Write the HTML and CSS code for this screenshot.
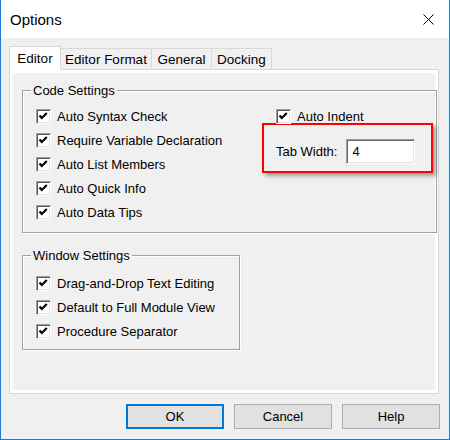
FILE: index.html
```html
<!DOCTYPE html>
<html lang="en">
<head>
    <meta charset="UTF-8">
    <title>Options</title>
    <link rel="stylesheet" href="styles.css">
</head>
<body>
    <div class="window">
        <div class="titlebar">
            <span class="title">Options</span>
            <svg class="close" width="11" height="11" viewBox="0 0 11 11">
                <path d="M0.5 0.5 L10.5 10.5 M10.5 0.5 L0.5 10.5" stroke="#000" stroke-width="1" fill="none"/>
            </svg>
        </div>

        <div class="dialog">
            <div class="tabs">
                <div class="tab active tab-editor">Editor</div>
                <div class="tab tab-format">Editor Format</div>
                <div class="tab tab-general">General</div>
                <div class="tab tab-docking">Docking</div>
            </div>

            <div class="panel">
                <fieldset class="group code-group">
                    <legend>Code Settings</legend>
                    <div class="cols">
                        <div class="col">
                            <div class="check"><span class="box"><svg viewBox="0 0 13 13"><path d="M2.5 5.5 L4.8 8 L9.8 3"/></svg></span>Auto Syntax Check</div>
                            <div class="check"><span class="box"><svg viewBox="0 0 13 13"><path d="M2.5 5.5 L4.8 8 L9.8 3"/></svg></span>Require Variable Declaration</div>
                            <div class="check"><span class="box"><svg viewBox="0 0 13 13"><path d="M2.5 5.5 L4.8 8 L9.8 3"/></svg></span>Auto List Members</div>
                            <div class="check"><span class="box"><svg viewBox="0 0 13 13"><path d="M2.5 5.5 L4.8 8 L9.8 3"/></svg></span>Auto Quick Info</div>
                            <div class="check"><span class="box"><svg viewBox="0 0 13 13"><path d="M2.5 5.5 L4.8 8 L9.8 3"/></svg></span>Auto Data Tips</div>
                        </div>
                        <div class="col">
                            <div class="check indent"><span class="box"><svg viewBox="0 0 13 13"><path d="M2.5 5.5 L4.8 8 L9.8 3"/></svg></span>Auto Indent</div>
                            <!-- red marker around the tab width field -->
                            <div class="highlight">
                                <span class="label">Tab Width:</span>
                                <input class="field" type="text" value="4">
                            </div>
                        </div>
                    </div>
                </fieldset>

                <fieldset class="group window-group">
                    <legend>Window Settings</legend>
                    <div class="rows">
                        <div class="check"><span class="box"><svg viewBox="0 0 13 13"><path d="M2.5 5.5 L4.8 8 L9.8 3"/></svg></span>Drag-and-Drop Text Editing</div>
                        <div class="check"><span class="box"><svg viewBox="0 0 13 13"><path d="M2.5 5.5 L4.8 8 L9.8 3"/></svg></span>Default to Full Module View</div>
                        <div class="check"><span class="box"><svg viewBox="0 0 13 13"><path d="M2.5 5.5 L4.8 8 L9.8 3"/></svg></span>Procedure Separator</div>
                    </div>
                </fieldset>
            </div>

            <div class="buttons">
                <button class="btn default">OK</button>
                <button class="btn">Cancel</button>
                <button class="btn">Help</button>
            </div>
        </div>
    </div>
</body>
</html>
```

FILE: styles.css
```css
html, body {
    margin: 0;
    padding: 0;
}

body {
    font-family: "Liberation Sans", Arial, sans-serif;
    font-size: 13px;
    color: #000;
    background: #f0f0f0;
}

.window {
    width: 450px;
    height: 440px;
    box-sizing: border-box;
    border: 1px solid #1a7fd4;
    border-top: none;
    background: #f0f0f0;
    display: flex;
    flex-direction: column;
}

/* title bar */
.titlebar {
    height: 38px;
    background: #fff;
    display: flex;
    align-items: center;
    justify-content: space-between;
    padding: 0 15px 0 9px;
}

.title {
    font-size: 15px;
}

.close {
    display: block;
}

.dialog {
    flex: 1;
    padding: 8px 10px 10px 8px;
    display: flex;
    flex-direction: column;
}

/* tabs */
.tabs {
    display: flex;
    align-items: flex-end;
    height: 23px;
    position: relative;
    z-index: 1;
}

.tab {
    box-sizing: border-box;
    height: 21px;
    border: 1px solid #d9d9d9;
    border-bottom: none;
    margin-left: -1px;
    font-size: 13.5px;
    display: flex;
    align-items: center;
    justify-content: center;
    background: #f0f0f0;
}

.tab.active {
    height: 24px;
    margin-left: 0;
    margin-bottom: -1px;
    background: #fff;
    position: relative;
    z-index: 2;
}

.tab-editor { width: 52px; }
.tab-format { width: 92px; }
.tab-general { width: 61px; }
.tab-docking { width: 61px; }

/* tab page */
.panel {
    box-sizing: border-box;
    height: 325px;
    border: 1px solid #d9d9d9;
    box-shadow: inset 0 0 0 3px #fff;
    padding: 13px 1px 0 12px;
}

.group {
    margin: 0;
    padding: 0;
    min-width: 0;
    border: 1px solid #a0a0a0;
    box-shadow: inset 1px 1px 0 #fff, 1px 1px 0 #fff;
}

.group legend {
    margin-left: 8px;
    padding: 0 2px;
    line-height: 15px;
}

.code-group {
    margin-bottom: 15px;
}

.window-group {
    width: 218px;
    box-sizing: border-box;
}

.cols {
    display: grid;
    grid-template-columns: 226px 171px;
    padding: 6px 0 8px 13px;
}

.rows {
    padding: 8px 0 6px 13px;
}

.check {
    display: flex;
    align-items: center;
    height: 24px;
    gap: 6px;
    white-space: nowrap;
}

.check.indent {
    padding-left: 14px;
}

.box {
    width: 15px;
    height: 15px;
    box-sizing: border-box;
    border: 1px solid;
    border-color: #a0a0a0 #fff #fff #a0a0a0;
    box-shadow: inset 1px 1px 0 #555, inset -1px -1px 0 #e3e3e3;
    background: #fff;
    flex: none;
}

.box svg {
    display: block;
    width: 13px;
    height: 13px;
}

.box path {
    fill: none;
    stroke: #000;
    stroke-width: 2.2;
}

/* red annotation frame */
.highlight {
    box-sizing: border-box;
    width: 171px;
    height: 50px;
    margin-top: -5px;
    border: 2px solid #f00;
    box-shadow: 3px 3px 4px rgba(0, 0, 0, 0.35);
    display: flex;
    align-items: center;
    gap: 9px;
    padding: 7px 0 0 12px;
}

.field {
    box-sizing: border-box;
    width: 69px;
    height: 25px;
    margin: 0;
    padding: 0 0 0 5px;
    font: inherit;
    color: #000;
    background: #fff;
    border: 1px solid;
    border-color: #a0a0a0 #fff #fff #a0a0a0;
    box-shadow: inset 1px 1px 0 #696969, inset -1px -1px 0 #e3e3e3;
    outline: none;
}

/* bottom buttons */
.buttons {
    display: flex;
    justify-content: flex-end;
    gap: 10px;
    margin: 10px -1px 0 0;
}

.btn {
    box-sizing: border-box;
    width: 98px;
    height: 25px;
    margin: 0;
    padding: 0;
    font: inherit;
    color: #000;
    background: #e1e1e1;
    border: 1px solid #adadad;
}

.btn.default {
    border: 2px solid #0078d7;
}
```
